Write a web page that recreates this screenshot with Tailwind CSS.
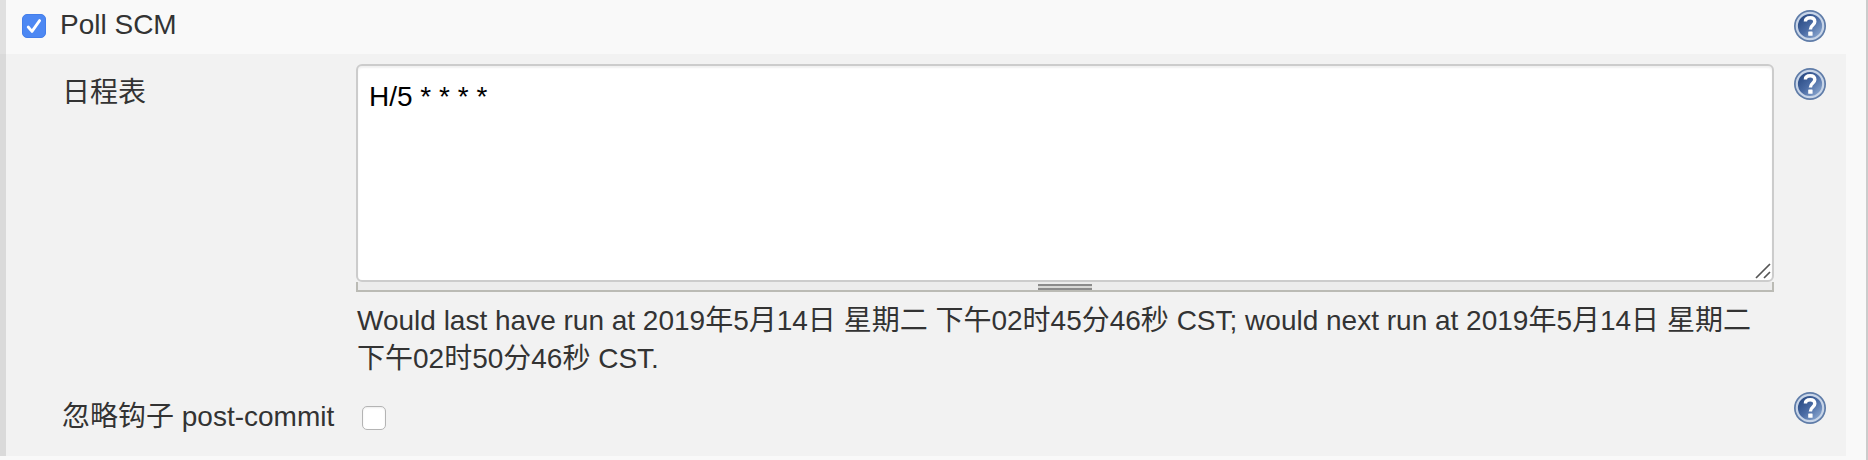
<!DOCTYPE html>
<html lang="zh-CN">
<head>
<meta charset="utf-8">
<meta name="viewport" content="width=device-width, initial-scale=1">
<title>Poll SCM</title>
<script src="https://cdn.jsdelivr.net/npm/@tailwindcss/browser@4"></script>
</head>
<body class="min-h-screen overflow-x-hidden bg-[#f9f9f9] font-['Liberation_Sans','Noto_Sans_CJK_SC',sans-serif] text-[28px] leading-[38px] text-[#333]">
<svg class="absolute size-0" aria-hidden="true">
  <defs>
    <linearGradient id="disc" x1="0" y1="0" x2="1" y2="1">
      <stop offset="0.2" stop-color="#2f5089"/>
      <stop offset="0.5" stop-color="#4a6ba4"/>
      <stop offset="0.9" stop-color="#8fabd2"/>
    </linearGradient>
    <symbol id="help" viewBox="0 0 32 32">
      <circle cx="16" cy="16" r="16" fill="#5f7ca8"/>
      <circle cx="16" cy="16" r="13.2" fill="url(#disc)" stroke="#c8d5e8" stroke-width="2.2"/>
      <path d="M11.4 11.6C11.4 9 13.4 7.8 16.2 7.8C19.2 7.8 20.8 9.4 20.8 11.8C20.8 15 16.4 15 16.4 19.4" fill="none" stroke="#fff" stroke-width="3.4"/>
      <rect x="14.2" y="21.4" width="4.4" height="4.4" rx="0.6" fill="#fff"/>
    </symbol>
  </defs>
</svg>
<main class="border-r-2 border-[#ccc] min-h-screen">
  <div class="flex h-[54px] items-start border-l-6 border-[#e0e0e0] pl-4 pr-10">
    <label class="flex grow items-start gap-[14px] pt-[6px]">
      <span class="mt-2 grid size-6 shrink-0">
        <input type="checkbox" checked class="col-start-1 row-start-1 size-6 appearance-none rounded-[5px] border border-[#447eea] bg-[#4d88f3]">
        <svg viewBox="0 0 24 24" class="pointer-events-none col-start-1 row-start-1 size-6" fill="none" stroke="#fff" stroke-width="2.8" stroke-linecap="round" stroke-linejoin="round" aria-hidden="true"><path d="M6.2 13L10 17.4L17.6 6.6"/></svg>
      </span>
      <span>Poll SCM</span>
    </label>
    <button type="button" aria-label="Help: Poll SCM" class="mt-[10px] size-8 shrink-0 rounded-full"><svg class="size-8"><use href="#help"/></svg></button>
  </div>
  <div class="mr-5 border-l-6 border-[#dadada] bg-[#f2f2f2] pb-5 pl-14 pr-5">
    <div class="flex items-start pt-[10px]">
      <label for="spec" class="w-[294px] shrink-0 pt-[10px]">日程表</label>
      <div class="min-w-0 grow">
        <div class="relative">
          <textarea id="spec" class="block h-[218px] w-full resize-none rounded-[6px] border-2 border-[#ccc] bg-white px-[11px] py-3 leading-[38px] text-black shadow-[inset_0_2px_2px_rgba(0,0,0,0.06)] outline-none">H/5 * * * *</textarea>
          <svg class="pointer-events-none absolute bottom-[3px] right-[3px] size-4" viewBox="0 0 16 16" stroke="#555" stroke-width="1.7" aria-hidden="true"><path d="M1 15L15 1M9 15L15 9"/></svg>
        </div>
        <div class="flex h-[10px] cursor-row-resize justify-center border-x-2 border-b-2 border-[#bbbbb5] bg-[#ececec] pt-[2px]">
          <div class="h-[6px] w-[54px] border-y-2 border-[#8b8b8b] bg-[#d8d8d6]"></div>
        </div>
        <p class="pl-px pt-[10px]">Would last have run at 2019年5月14日 星期二 下午02时45分46秒 CST; would next run at 2019年5月14日 星期二 下午02时50分46秒 CST.</p>
      </div>
      <button type="button" aria-label="帮助: 日程表" class="ml-5 mt-1 size-8 shrink-0 rounded-full"><svg class="size-8"><use href="#help"/></svg></button>
    </div>
    <div class="flex items-start pt-[14px]">
      <label for="ignore-hooks" class="w-[300px] shrink-0 whitespace-nowrap pt-[6px]">忽略钩子 post-commit</label>
      <div class="grow pt-[14px]"><input id="ignore-hooks" type="checkbox" class="block size-6 appearance-none rounded-[5px] border border-[#b4b4b4] bg-white shadow-[inset_0_1px_2px_rgba(0,0,0,0.08)] checked:bg-[#4d88f3]"></div>
      <button type="button" aria-label="帮助: 忽略钩子 post-commit" class="size-8 shrink-0 rounded-full"><svg class="size-8"><use href="#help"/></svg></button>
    </div>
  </div>
</main>
</body>
</html>
